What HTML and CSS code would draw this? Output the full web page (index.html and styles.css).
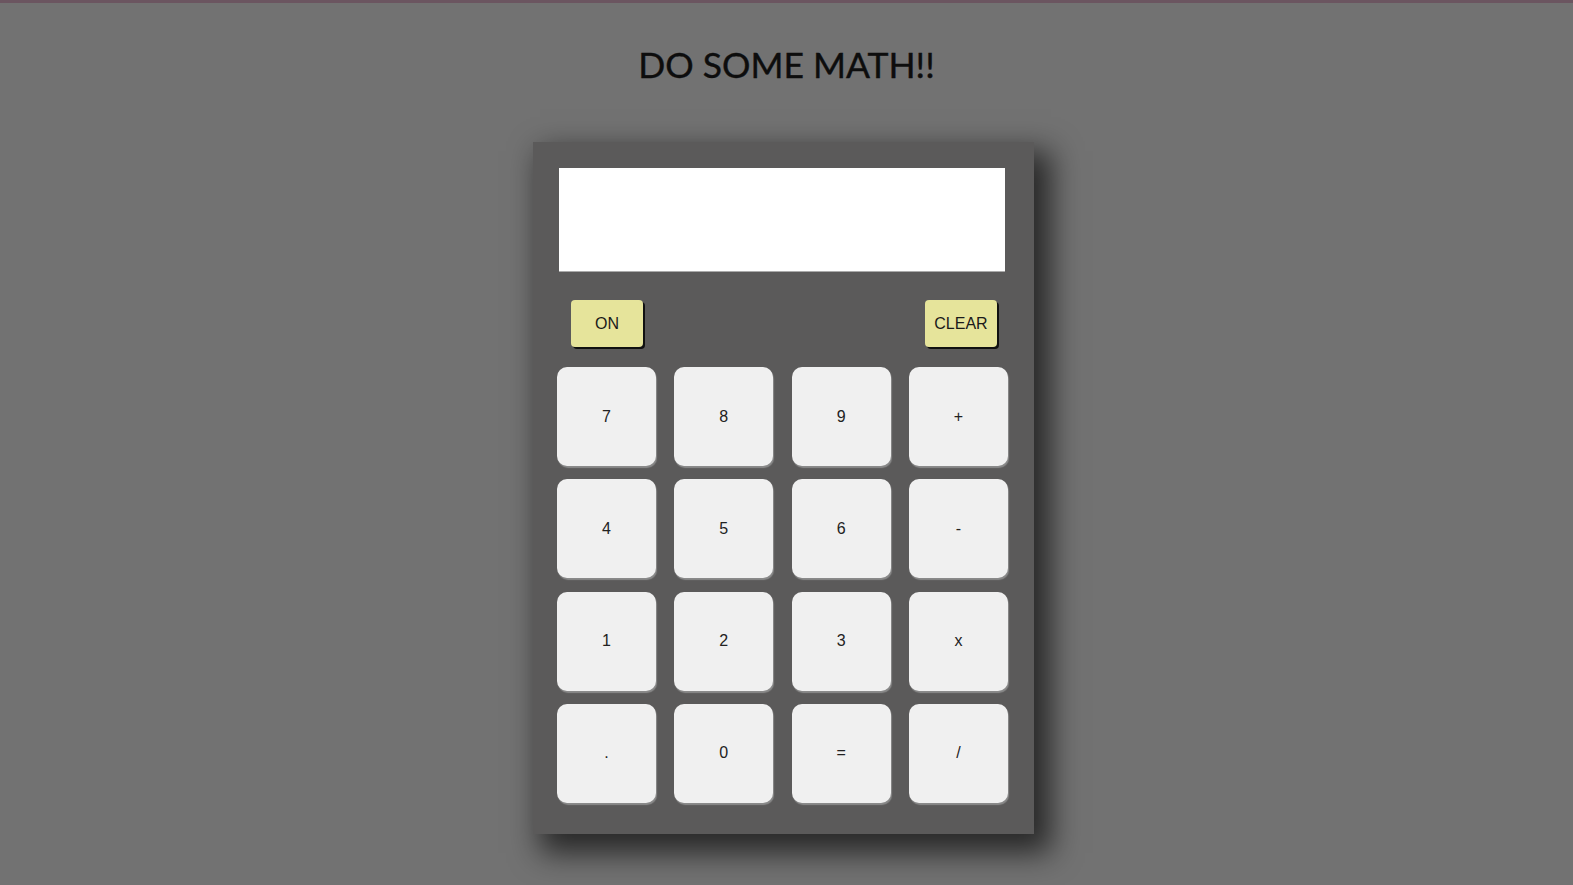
FILE: index.html
```html
<!DOCTYPE html>
<html>
<head>
<meta charset="utf-8">
<link rel="stylesheet" href="styles.css">
</head>
<body>
<div class="topbar"></div>
<h1 class="title">DO SOME MATH!!</h1>
<div class="calc">
  <div class="display"></div>
  <div class="controls">
    <button class="ctrl on">ON</button>
    <button class="ctrl clear">CLEAR</button>
  </div>
  <div class="keys">
    <button class="key">7</button>
    <button class="key">8</button>
    <button class="key">9</button>
    <button class="key">+</button>
    <button class="key">4</button>
    <button class="key">5</button>
    <button class="key">6</button>
    <button class="key">-</button>
    <button class="key">1</button>
    <button class="key">2</button>
    <button class="key">3</button>
    <button class="key">x</button>
    <button class="key">.</button>
    <button class="key">0</button>
    <button class="key">=</button>
    <button class="key">/</button>
  </div>
</div>
</body>
</html>
```
FILE: styles.css
```css
html, body {
  margin: 0;
  padding: 0;
  background: #727272;
  height: 100%;
  overflow: hidden;
}
body {
  display: flex;
  flex-direction: column;
  align-items: center;
}
.topbar {
  align-self: stretch;
  height: 3px;
  background: #6b5560;
}
.title {
  margin: 40px 0 0 0;
  height: 99px;
  font-family: "Lato", "Open Sans", sans-serif;
  font-weight: 400;
  font-size: 35.5px;
  line-height: 44px;
  color: #0d0d0d;
  text-align: center;
  -webkit-text-stroke: 0.4px #0d0d0d;
}
.calc {
  box-sizing: border-box;
  width: 501px;
  height: 692px;
  margin-right: 6px;
  background: #5b5a5a;
  padding: 26px 26px 30px 24px;
  box-shadow: 12px 14px 28px 5px rgba(0,0,0,0.65);
  display: flex;
  flex-direction: column;
}
.display {
  margin-left: 2px;
  width: 446px;
  height: 104px;
  background: #fff;
  border-bottom: 1px solid #aaa;
  box-sizing: border-box;
}
.controls {
  margin-top: 28px;
  display: flex;
  justify-content: space-between;
  padding: 0 11px 0 14px;
}
.ctrl {
  width: 72px;
  height: 47px;
  background: #e6e49b;
  border: none;
  border-radius: 4px;
  box-shadow: 2px 2px 0 #111;
  font-family: "Liberation Sans", Arial, sans-serif;
  font-size: 16px;
  color: #1a1a1a;
  padding: 0;
}
.keys {
  margin-top: 20px;
  display: grid;
  grid-template-columns: repeat(4, 99px);
  grid-auto-rows: 99px;
  column-gap: 18.3px;
  row-gap: 13.3px;
}
.key {
  background: #f0f0f0;
  border: none;
  border-radius: 10px;
  box-shadow: 1px 2px 1px #8a8a8a;
  font-family: "Liberation Sans", Arial, sans-serif;
  font-size: 16px;
  color: #222;
  padding: 0;
}
```
